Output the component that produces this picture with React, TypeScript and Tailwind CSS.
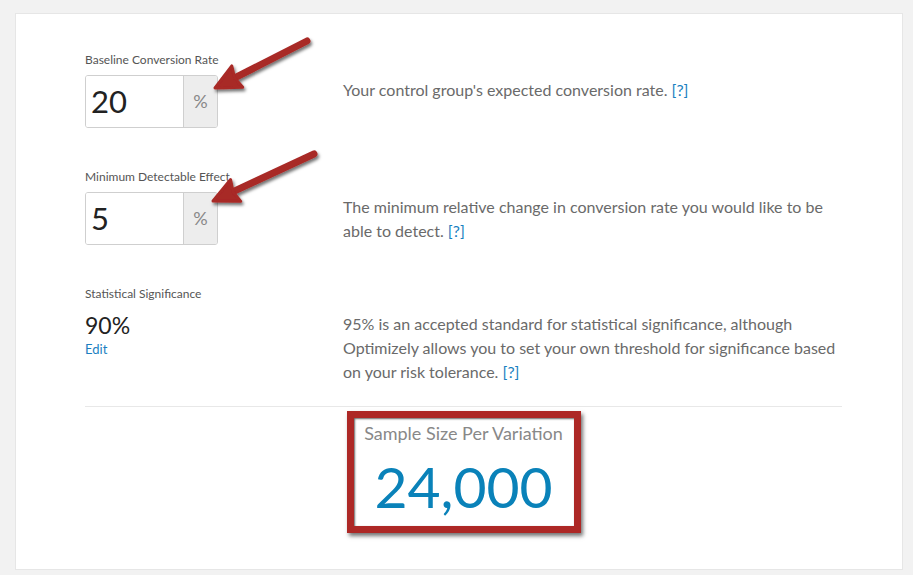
import React from 'react';

const font = { fontFamily: 'Lato, "Liberation Sans", sans-serif' };

const Help = () => <a className="text-[#1a7fc1]">[?]</a>;

const PercentInput = ({ value }: { value: string }) => (
  <div className="flex h-[53px] w-[133px] rounded-[3px] border border-[#cfcfcf] overflow-hidden">
    <div className="flex-1 flex items-center pl-[5px] text-[31px] text-[#222] bg-white">{value}</div>
    <div className="w-[34px] flex items-center justify-center border-l border-[#cfcfcf] bg-[#ededed] text-[18px] text-[#888]">%</div>
  </div>
);

const Arrow = ({ x1, y1, x2, y2 }: { x1: number; y1: number; x2: number; y2: number }) => {
  const a = Math.atan2(y2 - y1, x2 - x1);
  const back = 25;
  const half = 12;
  const bx = x2 - Math.cos(a) * back;
  const by = y2 - Math.sin(a) * back;
  const px = -Math.sin(a) * half;
  const py = Math.cos(a) * half;
  return (
    <g>
      <line x1={x1} y1={y1} x2={bx + Math.cos(a) * 4} y2={by + Math.sin(a) * 4} stroke="#a82927" strokeWidth="7" strokeLinecap="round" />
      <polygon
        points={`${x2},${y2} ${bx + px},${by + py} ${bx + Math.cos(a) * 3},${by + Math.sin(a) * 3} ${bx - px},${by - py}`}
        fill="#a82927"
        stroke="#a82927"
        strokeWidth="3"
        strokeLinejoin="round"
      />
    </g>
  );
};

export default function App() {
  return (
    <div className="relative min-h-[575px] w-[913px] bg-[#f2f2f2] pt-[13px] pl-[15px]" style={font}>
      <div className="w-[888px] h-[557px] bg-white border border-[#e6e6e6] pt-[38px] pl-[69px] pr-[60px]">
        {/* Baseline */}
        <div className="flex">
          <div className="w-[258px] shrink-0">
            <div className="text-[12px] leading-[16px] text-[#555]">Baseline Conversion Rate</div>
            <div className="mt-[7px]"><PercentInput value="20" /></div>
          </div>
          <div className="pt-[26px] text-[16px] leading-[24px] text-[#6a6a6a]">
            Your control group's expected conversion rate. <Help />
          </div>
        </div>

        {/* MDE */}
        <div className="flex mt-[41px]">
          <div className="w-[258px] shrink-0">
            <div className="text-[12px] leading-[16px] text-[#555]">Minimum Detectable Effect</div>
            <div className="mt-[7px]"><PercentInput value="5" /></div>
          </div>
          <div className="pt-[26px] w-[500px] text-[16px] leading-[24px] text-[#6a6a6a]">
            The minimum relative change in conversion rate you would like to be able to detect. <Help />
          </div>
        </div>

        {/* Significance */}
        <div className="flex mt-[41px]">
          <div className="w-[258px] shrink-0">
            <div className="text-[12px] leading-[16px] text-[#555]">Statistical Significance</div>
            <div className="mt-[11px] text-[23px] leading-[24px] text-[#222]">90%</div>
            <div className="mt-[4px] text-[13px] leading-[16px] text-[#1a7fc1]">Edit</div>
          </div>
          <div className="pt-[26px] w-[500px] text-[16px] leading-[24px] text-[#6a6a6a]">
            95% is an accepted standard for statistical significance, although Optimizely allows you to set your own threshold for significance based on your risk tolerance. <Help />
          </div>
        </div>

        <div className="mt-[22px] h-px w-[757px] bg-[#e8e8e8]" />

        <div className="flex justify-center w-[757px] mt-[4px]">
          <div className="w-[234px] h-[122px] border-[7px] border-[#ad2826] bg-white shadow-[2px_3px_4px_rgba(0,0,0,0.55),inset_1px_1px_2px_rgba(0,0,0,0.6)] flex flex-col items-center">
            <div className="mt-[5px] text-[18px] leading-[20px] text-[#888]">Sample Size Per Variation</div>
            <div className="mt-[13px] text-[57px] leading-[60px] text-[#0a82b9]">24,000</div>
          </div>
        </div>
      </div>

      <svg className="absolute inset-0 pointer-events-none" width="913" height="575">
        <defs>
          <filter id="sh" x="-20%" y="-20%" width="140%" height="140%">
            <feDropShadow dx="1.5" dy="2.5" stdDeviation="1.5" floodColor="#000" floodOpacity="0.55" />
          </filter>
        </defs>
        <g filter="url(#sh)">
          <Arrow x1={307} y1={41} x2={215} y2={88} />
          <Arrow x1={314} y1={154} x2={213} y2={201} />
        </g>
      </svg>
    </div>
  );
}
